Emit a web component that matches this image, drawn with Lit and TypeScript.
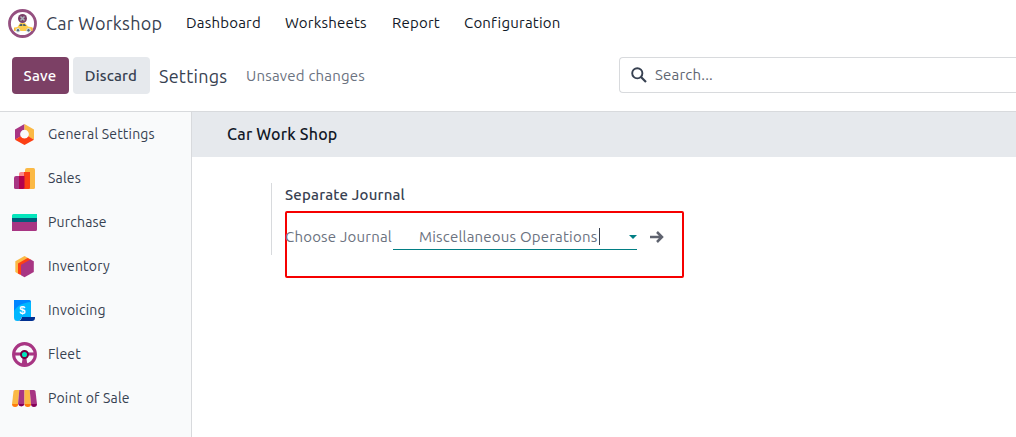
import { LitElement, html, css, svg } from "lit";
import { customElement } from "lit/decorators.js";

const icons: Record<string, unknown> = {
  general: svg`<path fill="#a83583" d="M12.5 2 3 7.4v10.4l5.6-3.4a4.5 4.5 0 0 1 3.9-6.6z"/><path fill="#fbb945" d="M12.5 2 22 7.4v10.4l-5.6-3.4a4.5 4.5 0 0 0-3.9-6.6z"/><path fill="#fc3f14" d="m3 17.8 9.5 5.2 9.5-5.2-5.6-3.5a4.5 4.5 0 0 1-7.8 0z"/>`,
  sales: svg`<path fill="#fbb945" d="M13 4a2 2 0 0 1 2-2h6.5a1.500 1.500 0 0 1 1.500 1.500V21.500a1.500 1.500 0 0 1-1.500 1.500H13z"/><path fill="#fc868b" d="M7 8a2 2 0 0 1 2-2h4v17H7z"/><path fill="#fc3f14" d="M12 6h6v15.500a1.500 1.500 0 0 1-1.500 1.500H12z"/><path fill="#a83583" d="M2 12a2 2 0 0 1 2-2h4v13H3.500A1.500 1.500 0 0 1 2 21.500z"/><path fill="#b4004e" d="M7 10h5.500v11.500a1.500 1.500 0 0 1-1.500 1.500H7z"/>`,
  purchase: svg`<path fill="#a83583" d="M0 8h25v11.500a1.500 1.500 0 0 1-1.500 1.500H0z"/><path fill="#04e5bc" d="M0 5.500A1.500 1.500 0 0 1 1.500 4H25v4H0z"/><path fill="#005e7a" d="M0 8h25v2.500a1.500 1.500 0 0 1-1.500 1.500h-22A1.500 1.500 0 0 1 0 10.500z"/>`,
  inventory: svg`<path fill="#fbb945" d="m12.500 2 5 2.800L6.500 20 3.300 18V7.300z"/><path fill="#fc3f14" d="m15.500 4 4 2-11 15-2.500-1.500V9.400z"/><path fill="#a83583" d="m18.500 5.500 3.300 1.800V18L12.500 23.200l-3.500-2V10.800z"/>`,
  invoicing: svg`<path fill="#0086ff" d="M2 2h15.500a1.500 1.500 0 0 1 1.500 1.500V13H2z"/><path fill="#00b7ff" d="M19 4v15H9.500c0 2.200-1.700 4-4 4A3.500 3.500 0 0 1 2 19.500V13C5 8 11 4.500 19 4z"/><path fill="#002f91" d="M9.800 19H23v1c0 1.700-1.300 3-3 3H6c2 0 3.500-1.600 3.800-4z"/><text class="dollar" x="10.500" y="15.500" text-anchor="middle">$</text>`,
  fleet: svg`<g stroke="#a83583" stroke-width="3.100" fill="none"><circle cx="12.500" cy="12.500" r="10.900"/><path d="M2 12h21"/></g><path fill="#a83583" d="M11 14h3l1.500 9h-6z"/><circle cx="12.500" cy="12.500" r="3.500" fill="#04e5bc" stroke="#74003f" stroke-width="1.900"/>`,
  pos: svg`<path fill="#fbb945" d="M3.500 4h3.800L6 18H0L1.500 5.500C1.700 4.500 2.500 4 3.500 4z"/><path fill="#a83583" d="M7.300 4h5.200v14H6z"/><path fill="#fbb945" d="M12.500 4h5.200L19 18h-6.500z"/><path fill="#a83583" d="M17.700 4h3.800c1 0 1.800.5 2 1.500L25 18h-6z"/><path fill="#ff7d0a" d="M0 18h6.200a3.100 3 0 0 1-6.200 0zm12.500 0H19a3.200 3 0 0 1-6.500 0z"/><path fill="#850059" d="M6.200 18h6.300a3.200 3 0 0 1-6.300 0zm12.800 0h6a3 3 0 0 1-6 0z"/>`,
};

const apps = [
  ["general", "General Settings"],
  ["sales", "Sales"],
  ["purchase", "Purchase"],
  ["inventory", "Inventory"],
  ["invoicing", "Invoicing"],
  ["fleet", "Fleet"],
  ["pos", "Point of Sale"],
];

@customElement("app-root")
export class AppRoot extends LitElement {
  static styles = css`
    :host {
      display: flex;
      flex-direction: column;
      height: 437px;
      overflow: hidden;
      background: #fff;
      color: #374151;
      font: 15px/20px "Ubuntu", "Noto Sans", sans-serif;
      letter-spacing: 0.200px;
      white-space: nowrap;
    }
    * { box-sizing: border-box; }
    svg { display: block; flex: none; }
    header { display: flex; align-items: center; height: 46px; padding-left: 8px; }
    .brand { width: 140px; margin-left: 9px; font-size: 18px; letter-spacing: 0.250px; }
    nav { display: flex; color: #111827; }
    .dashboard { width: 99px; }
    .worksheets { width: 107px; }
    .report { width: 72px; }
    .panel { display: flex; height: 66px; padding: 11px 0 0 12px; border-bottom: 1px solid #d8dadd; }
    button { height: 37px; padding: 0 1px 0 0; border: 0; border-radius: 4px; font: 500 15px/20px "Ubuntu", "Noto Sans", sans-serif; letter-spacing: 0.200px; }
    .save { width: 57px; background: #7c4065; color: #fff; }
    .discard { width: 77px; margin-left: 4px; background: #e6e9ed; color: #374151; }
    .title { width: 87px; padding-top: 9px; margin-left: 9px; font-size: 18px; letter-spacing: 0.250px; }
    .status { width: 373px; padding-top: 9px; color: #6b7280; }
    .search { display: flex; align-items: center; flex: 1; height: 36px; padding-left: 11px; border: 1px solid #d8dadd; border-right: 0; border-radius: 4px 0 0 4px; color: #5f6672; }
    .search span { margin-left: 8px; }
    .body { display: flex; flex: 1; }
    aside { width: 192px; background: #f9fafb; border-right: 1px solid #d8dadd; font-size: 14px; }
    .app { display: flex; align-items: center; height: 44px; padding-left: 12px; }
    .app span { margin-left: 11px; }
    .dollar { font: bold 11px "Liberation Sans", sans-serif; fill: #fff; }
    main { flex: 1; }
    h2 { margin: 0; height: 45px; padding: 12px 0 0 35px; background: #e6e9ed; color: #111827; font-size: 16px; line-height: 20px; font-weight: 500; }
    .setting { height: 72px; margin: 26px 0 0 79px; border-left: 1px solid #d8dadd; padding: 2px 0 0 13px; }
    h3 { margin: 0; font-size: 15px; line-height: 20px; font-weight: 500; }
    .highlight { display: flex; width: 399px; height: 67px; margin-top: 6px; padding-top: 10px; border: 2px solid #f60000; border-radius: 2px; color: #6b7280; }
    .label { flex: none; width: 108px; margin-left: -2px; padding-top: 4px; }
    .field { display: flex; flex: none; align-items: center; width: 244px; height: 27px; padding: 1px 0 0 26px; border-bottom: 1px solid #017e84; }
    .value { flex: none; width: 181px; height: 17px; line-height: 17px; border-right: 1px solid #374151; }
    .caret { margin-left: 29px; }
    .go { margin: 8px 0 0 13px; }
  `;

  render() {
    return html`
      <header>
        <svg width="29" height="29" viewBox="0 0 29 29">
          <circle cx="14.500" cy="14.500" r="13" fill="#fff" stroke="#955080" stroke-width="2.800" />
          <circle cx="14.500" cy="9.500" r="4.500" fill="#7b4169" />
          <path d="m12.500 7.500 4 4m0-4-4 4" stroke="#a9b6bb" stroke-width="1.500" />
          <path d="m9.500 18 2.500-4h5l3 3.500 4.500.7V22H6v-3.500z" fill="#fdcd4f" />
          <path d="m11 17 1.500-2h1.800v2zm4.200 0v-2h1.400l1.700 2z" fill="#49636b" />
          <path d="M6 20h1m16 0h2" stroke="#ee9a39" />
          <g fill="#536b76" stroke="#d6e6ed"><circle cx="10" cy="21.300" r="1.800" /><circle cx="20.500" cy="21.300" r="1.800" /></g>
        </svg>
        <span class="brand">Car Workshop</span>
        <nav>
          <span class="dashboard">Dashboard</span>
          <span class="worksheets">Worksheets</span>
          <span class="report">Report</span>
          <span class="configuration">Configuration</span>
        </nav>
      </header>
      <div class="panel">
        <button class="save">Save</button>
        <button class="discard">Discard</button>
        <span class="title">Settings</span>
        <span class="status">Unsaved changes</span>
        <div class="search">
          <svg width="16" height="18" viewBox="0 0 16 18" fill="none" stroke="#374151"><circle cx="6.300" cy="7.300" r="5.100" stroke-width="1.900" /><path d="m10 11 5 5" stroke-width="2.200" /></svg>
          <span>Search...</span>
        </div>
      </div>
      <div class="body">
        <aside>
          ${apps.map(([id, name]) => html`<div class="app"><svg width="25" height="25" viewBox="0 0 25 25">${icons[id]}</svg><span class=${id}>${name}</span></div>`)}
        </aside>
        <main>
          <h2>Car Work Shop</h2>
          <section class="setting">
            <h3><span class="heading">Separate Journal</span></h3>
            <div class="highlight">
              <span class="label">Choose Journal</span>
              <div class="field">
                <span class="value">Miscellaneous Operations</span>
                <svg class="caret" width="8" height="4" viewBox="0 0 8 4"><path d="M0 0h8L4 4z" fill="#017e84" /></svg>
              </div>
              <svg class="go" width="14" height="12" viewBox="0 0 14 12" fill="none" stroke="#5f636f" stroke-width="2.500"><path d="M0 6h12M7 1l5 5-5 5" /></svg>
            </div>
          </section>
        </main>
      </div>
    `;
  }
}
